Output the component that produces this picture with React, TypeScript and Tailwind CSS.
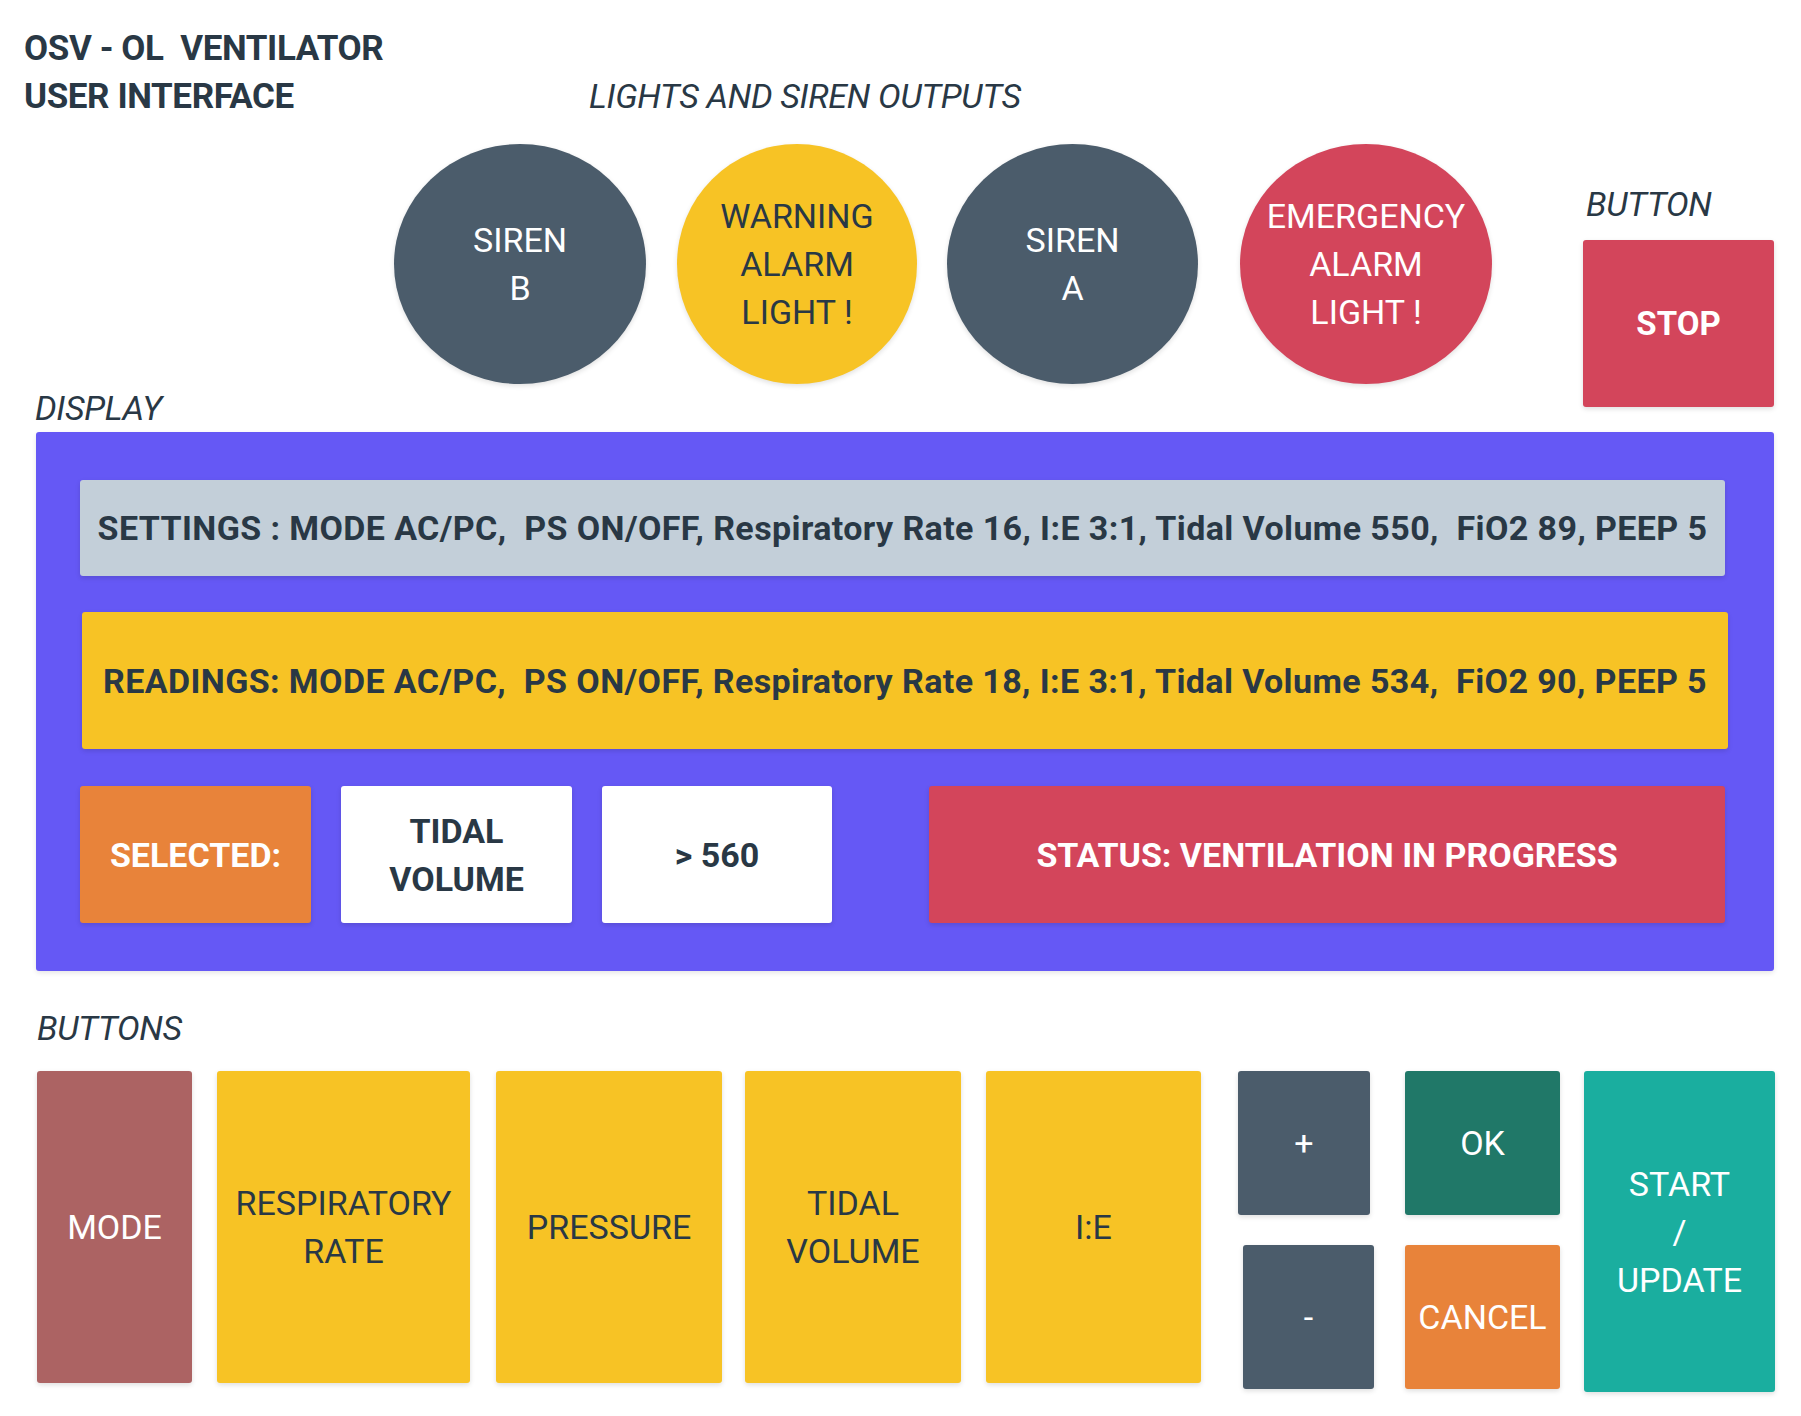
import React from 'react';

const ink = 'text-[#293845]';
const box = 'flex items-center justify-center text-center rounded-[3px] shadow-[0_2px_5px_rgba(0,0,0,0.13)]';
const label = `italic text-[34px] leading-[48px] tracking-[-0.3px] ${ink}`;

const Light = ({ w, ml, color, text, children }: { w: string; ml: string; color: string; text: string; children: React.ReactNode }) => (
  <div className={`${w} ${ml} ${color} ${text} h-[240px] rounded-[50%] flex items-center justify-center text-center text-[34px] leading-[48px] shadow-[0_2px_5px_rgba(0,0,0,0.12)]`}>
    <div>{children}</div>
  </div>
);

const App: React.FC = () => {
  return (
    <div className={`w-[1801px] h-[1416px] bg-white font-['Roboto',sans-serif] ${ink}`}>
      {/* top area: title, lights, stop button */}
      <div className="flex h-[432px]">
        <div className="w-[394px] flex flex-col">
          <h1 className="pl-[24px] pt-[25px] text-[35px] leading-[48px] font-bold tracking-[-0.4px]">
            <div className="whitespace-pre">OSV - OL  VENTILATOR</div>
            <div>USER INTERFACE</div>
          </h1>
          <div className={`mt-auto pl-[35px] ${label}`}>DISPLAY</div>
        </div>

        <div className="w-[1189px]">
          <div className={`mt-[72px] pl-[195px] ${label}`}>LIGHTS AND SIREN OUTPUTS</div>
          <div className="mt-[24px] flex">
            <Light w="w-[252px]" ml="" color="bg-[#4b5c6b]" text="text-white">
              SIREN<br />B
            </Light>
            <Light w="w-[240px]" ml="ml-[31px]" color="bg-[#f7c325]" text={ink}>
              WARNING<br />ALARM<br />LIGHT !
            </Light>
            <Light w="w-[251px]" ml="ml-[30px]" color="bg-[#4b5c6b]" text="text-white">
              SIREN<br />A
            </Light>
            <Light w="w-[252px]" ml="ml-[42px]" color="bg-[#d3455b]" text="text-white">
              EMERGENCY<br />ALARM<br />LIGHT !
            </Light>
          </div>
        </div>

        <div className="w-[191px] pt-[180px]">
          <div className={`pl-[3px] ${label}`}>BUTTON</div>
          <button className={`mt-[12px] w-full h-[167px] bg-[#d3455b] text-white text-[33px] font-bold ${box}`}>
            STOP
          </button>
        </div>
      </div>

      {/* display panel */}
      <div className="ml-[36px] w-[1738px] h-[539px] bg-[#6558f5] rounded-[3px] pt-[48px] pl-[44px] shadow-[0_2px_5px_rgba(0,0,0,0.1)]">
        <div className={`w-[1645px] h-[96px] bg-[#c3cfd9] text-[34px] leading-[48px] font-bold tracking-[0.4px] whitespace-pre ${box}`}>
          SETTINGS : MODE AC/PC,  PS ON/OFF, Respiratory Rate 16, I:E 3:1, Tidal Volume 550,  FiO2 89, PEEP 5
        </div>
        <div className={`mt-[36px] ml-[2px] w-[1646px] h-[137px] bg-[#f7c325] text-[34px] leading-[48px] font-bold tracking-[0.4px] whitespace-pre ${box}`}>
          READINGS: MODE AC/PC,  PS ON/OFF, Respiratory Rate 18, I:E 3:1, Tidal Volume 534,  FiO2 90, PEEP 5
        </div>
        <div className="mt-[37px] flex h-[137px] text-[34px] leading-[48px] font-bold">
          <div className={`w-[231px] bg-[#e8833a] text-white ${box}`}>SELECTED:</div>
          <div className={`ml-[30px] w-[231px] bg-white ${box}`}>
            TIDAL<br />VOLUME
          </div>
          <div className={`ml-[30px] w-[230px] bg-white ${box}`}>&gt; 560</div>
          <div className={`ml-[97px] w-[796px] bg-[#d3455b] text-white ${box}`}>STATUS: VENTILATION IN PROGRESS</div>
        </div>
      </div>

      {/* control buttons */}
      <div className={`mt-[33px] pl-[37px] ${label}`}>BUTTONS</div>
      <div className="mt-[19px] pl-[37px] flex items-start text-[34px] leading-[48px]">
        <button className={`w-[155px] h-[312px] bg-[#ac6363] text-white ${box}`}>MODE</button>
        <button className={`ml-[25px] w-[253px] h-[312px] bg-[#f7c325] ${box}`}>
          RESPIRATORY<br />RATE
        </button>
        <button className={`ml-[26px] w-[226px] h-[312px] bg-[#f7c325] ${box}`}>PRESSURE</button>
        <button className={`ml-[23px] w-[216px] h-[312px] bg-[#f7c325] ${box}`}>
          TIDAL<br />VOLUME
        </button>
        <button className={`ml-[25px] w-[215px] h-[312px] bg-[#f7c325] ${box}`}>I:E</button>

        <div className="ml-[37px] w-[136px] flex flex-col">
          <button className={`w-[132px] h-[144px] bg-[#4b5c6b] text-white ${box}`}>+</button>
          <button className={`mt-[30px] ml-[5px] w-[131px] h-[144px] bg-[#4b5c6b] text-white ${box}`}>-</button>
        </div>

        <div className="ml-[31px] w-[155px] flex flex-col">
          <button className={`h-[144px] bg-[#207868] text-white ${box}`}>OK</button>
          <button className={`mt-[30px] h-[144px] bg-[#e8833a] text-white ${box}`}>CANCEL</button>
        </div>

        <button className={`ml-[24px] w-[191px] h-[321px] bg-[#1aae9f] text-white ${box}`}>
          START<br />/<br />UPDATE
        </button>
      </div>
    </div>
  );
};

export default App;
